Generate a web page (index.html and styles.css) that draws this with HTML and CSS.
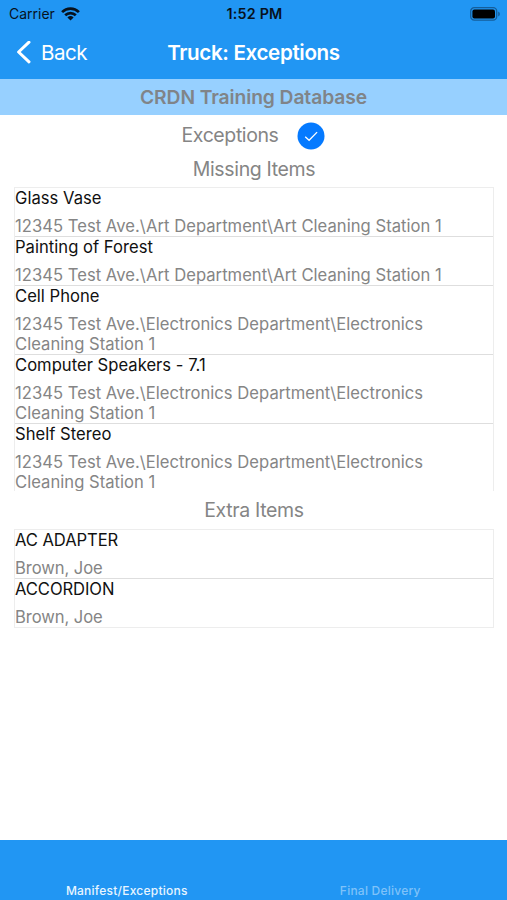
FILE: index.html
```html
<!DOCTYPE html>
<html lang="en">
<head>
<meta charset="utf-8">
<title>Truck: Exceptions</title>
<link rel="stylesheet" href="styles.css">
</head>
<body>
<header class="header">
  <div class="status">
    <div class="carrier"><span>Carrier</span>
      <svg width="19" height="14" viewBox="0 0 19 14" fill="none" stroke="#07121d" stroke-width="2.7"><path d="M1.1 5.1a12 12 0 0 1 16.8 0M4.2 8.3a7.6 7.6 0 0 1 10.6 0"/><path d="M9.5 13.6 6.4 10.5a4.5 4.5 0 0 1 6.2 0z" fill="#07121d" stroke="none"/></svg>
    </div>
    <span class="time">1:52 PM</span>
    <svg class="battery" width="31" height="14" viewBox="0 0 31 14"><rect x=".7" y=".7" width="26" height="12.4" rx="3.6" fill="none" stroke="#155e9b" stroke-width="1.3"/><rect x="2.4" y="2.4" width="22.6" height="9" rx="2" fill="#000"/><path d="M28.2 4.6v4.8q1.7-.8 1.7-2.4t-1.7-2.4z" fill="#155e9b"/></svg>
  </div>
  <nav class="navbar">
    <a class="back"><svg width="15" height="24" viewBox="0 0 15 24" fill="none" stroke="#fff" stroke-width="3" stroke-linecap="round" stroke-linejoin="round"><path d="M13 1.2 2.6 11 13 20.8"/></svg><span>Back</span></a>
    <h1>Truck: Exceptions</h1>
  </nav>
</header>
<div class="database"><span>CRDN Training Database</span></div>
<main>
  <div class="filter"><span>Exceptions</span>
    <svg width="28" height="28" viewBox="0 0 28 28"><circle cx="14" cy="14" r="13.5" fill="#057aff"/><path d="m8.2 14.7 3.9 3.6 8-8.2" fill="none" stroke="#fff" stroke-width="1.3"/></svg>
  </div>
  <h2 class="missing-title">Missing Items</h2>
  <ul class="list missing">
    <li><b>Glass Vase</b><p>12345 Test Ave.\Art Department\Art Cleaning Station 1</p></li>
    <li><b>Painting of Forest</b><p>12345 Test Ave.\Art Department\Art Cleaning Station 1</p></li>
    <li><b>Cell Phone</b><p>12345 Test Ave.\Electronics Department\Electronics<br>Cleaning Station 1</p></li>
    <li><b>Computer Speakers - 7.1</b><p>12345 Test Ave.\Electronics Department\Electronics<br>Cleaning Station 1</p></li>
    <li><b>Shelf Stereo</b><p>12345 Test Ave.\Electronics Department\Electronics<br>Cleaning Station 1</p></li>
  </ul>
  <h2 class="extra-title">Extra Items</h2>
  <ul class="list extra">
    <li><b>AC ADAPTER</b><p>Brown, Joe</p></li>
    <li><b>ACCORDION</b><p>Brown, Joe</p></li>
  </ul>
</main>
<footer class="tabs"><a class="active">Manifest/Exceptions</a><a>Final Delivery</a></footer>
</body>
</html>
```
FILE: styles.css
```css
* { box-sizing: border-box; margin: 0; padding: 0; }
body { height: 900px; display: flex; flex-direction: column; overflow: hidden; background: #fff; color: #858585; font-family: Inter, sans-serif; }
svg { display: block; flex: none; }
.header { height: 79px; background: #2196f3; }
.status { height: 27px; display: grid; grid-template-columns: 1fr auto 1fr; align-items: center; padding: 0 7px 0 9px; color: #07121d; font-size: 14px; }
.carrier { display: flex; align-items: center; gap: 6px; }
.time { font-weight: 600; font-size: 14.3px; letter-spacing: .2px; }
.battery { justify-self: end; margin-right: -1px; }
.navbar { height: 51px; display: grid; grid-template-columns: 1fr auto 1fr; align-items: center; padding: 0 16px; color: #fff; }
.back { display: flex; align-items: center; gap: 10px; font-size: 20.6px; letter-spacing: -.5px; }
h1 { font-size: 20.6px; font-weight: 600; letter-spacing: -.35px; }
.database { height: 36px; background: #97d0ff; display: flex; align-items: center; justify-content: center; color: #808488; font-size: 19.3px; font-weight: 600; letter-spacing: -.1px; }
main { flex: 1; padding: 0 13px 0 14px; }
.filter { height: 41px; display: flex; align-items: center; justify-content: center; gap: 18px; padding-right: 2px; font-size: 19.5px; letter-spacing: -.4px; }
.filter span { padding-bottom: 2px; }
h2 { font-size: 19.5px; font-weight: 400; text-align: center; letter-spacing: -.35px; }
.missing-title { height: 31px; line-height: 27px; }
.extra-title { height: 38px; line-height: 39px; }
.list { list-style: none; border: 1px solid #ededed; }
.missing { height: 304px; overflow: hidden; border-bottom: 0; }
li + li { border-top: 1px solid #dedede; }
b { display: block; height: 20px; line-height: 20px; margin-bottom: 8px; color: #111; font-size: 16.6px; font-weight: 400; letter-spacing: .02px; }
p { line-height: 20px; font-size: 16.6px; letter-spacing: .03px; }
.extra b, .extra p { letter-spacing: -.08px; }
.tabs { height: 60px; background: #2196f3; display: grid; grid-template-columns: 1fr 1fr; align-items: end; padding-bottom: 1px; text-align: center; font-size: 12px; line-height: 16px; font-weight: 500; letter-spacing: .23px; color: #7fc2f9; }
.active { color: #e8f5ff; }
```
